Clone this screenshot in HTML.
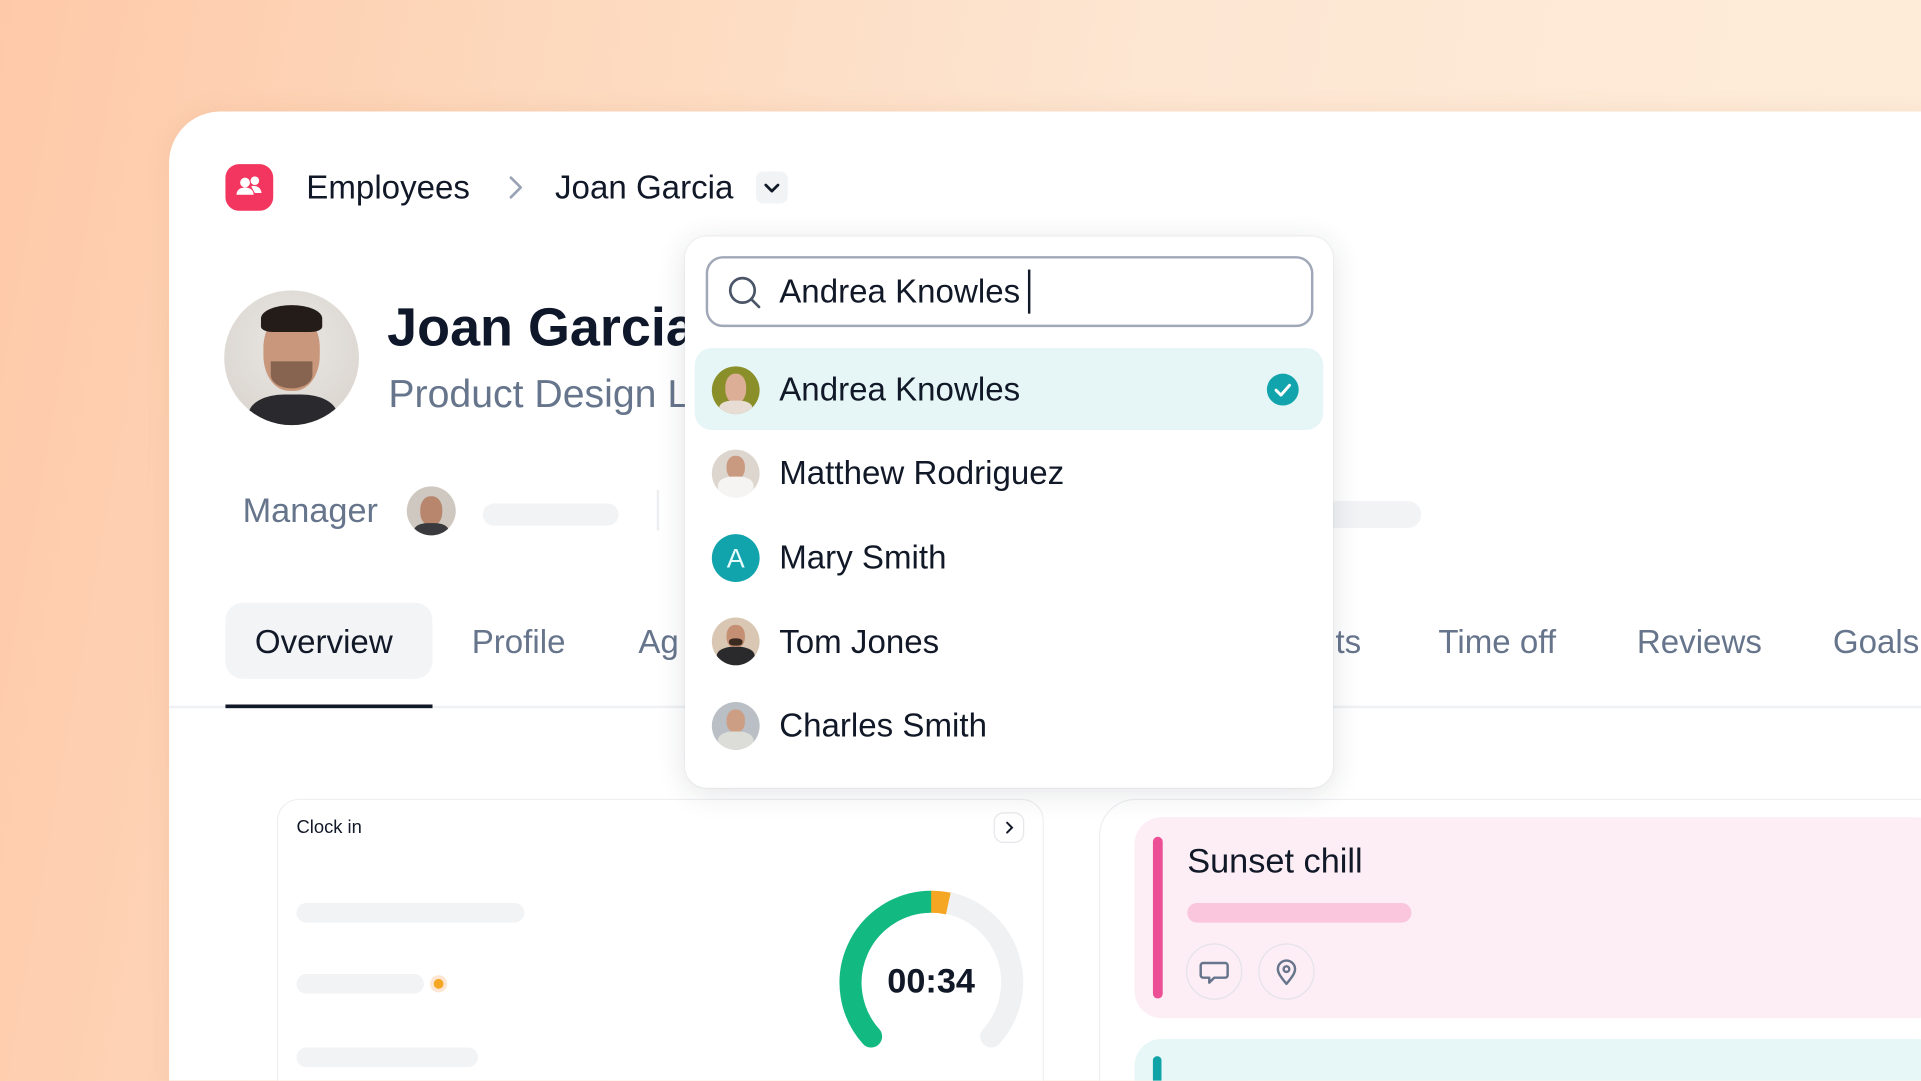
<!DOCTYPE html>
<html><head><meta charset="utf-8">
<style>
*{margin:0;padding:0;box-sizing:border-box}
html,body{width:1921px;height:1081px;overflow:hidden}
body{font-family:"Liberation Sans",sans-serif;color:#111827}
#clip{position:absolute;left:0;top:0;width:1921px;height:1081px;overflow:hidden;background:linear-gradient(100deg,#fec9a8 0%,#fdd8bc 25%,#fde6d2 55%,#feeedb 100%)}
#w{position:absolute;left:0;top:0;width:1568px;height:882px;overflow:hidden;transform:scale(1.2252);transform-origin:0 0}
.a{position:absolute}
.card{left:138px;top:91px;width:1440px;height:800px;background:#fff;border-radius:42px 0 0 0;box-shadow:0 0 18px rgba(200,140,100,.15)}
.t{position:absolute;white-space:nowrap;line-height:1}
.bar{position:absolute;background:#f2f3f5;border-radius:9px}
.av{position:absolute;border-radius:50%;overflow:hidden}
.tab{font-size:27px;color:#66758c;top:511px}
.row{position:absolute;left:567px;width:513px;height:67px;border-radius:14px}
.name{position:absolute;left:636px;font-size:27px;color:#111827;line-height:1}
</style></head><body><div id="clip"><div id="w">
<div class="a card"></div>

<!-- breadcrumb -->
<div class="a" style="left:184px;top:134px;width:39px;height:38px;background:#f3365f;border-radius:11px"></div>
<svg class="a" style="left:184px;top:134px" width="39" height="38" viewBox="0 0 39 38"><circle cx="16" cy="15" r="4" fill="#fff"/><circle cx="24" cy="13.5" r="3.5" fill="#fff"/><path d="M9 25c0-4 3-6 7-6s7 2 7 6z" fill="#fff"/><path d="M21 18c4-1 8 1 8.5 5.5H24" fill="#fff"/></svg>
<div class="t" style="left:250px;top:140px;font-size:27px;font-weight:500;color:#111827">Employees</div>
<svg class="a" style="left:412px;top:142px" width="18" height="22"><path d="M5 3l8 8-8 8" stroke="#9aa3b5" stroke-width="2.2" fill="none" stroke-linecap="round" stroke-linejoin="round"/></svg>
<div class="t" style="left:453px;top:140px;font-size:27px;color:#111827">Joan Garcia</div>
<div class="a" style="left:617px;top:140px;width:26px;height:26px;background:#f1f3f5;border-radius:6px"></div>
<svg class="a" style="left:617px;top:140px" width="26" height="26"><path d="M8 11l5 5 5-5" stroke="#111827" stroke-width="2.2" fill="none" stroke-linecap="round" stroke-linejoin="round"/></svg>

<!-- profile -->
<div class="av" style="left:183px;top:237px;width:110px;height:110px;background:radial-gradient(circle at 50% 40%,#e9e6e2,#d8d2cc)">
 <div class="a" style="left:20px;top:85px;width:72px;height:40px;border-radius:40% 40% 0 0;background:#2a2a2e"></div>
 <div class="a" style="left:32px;top:18px;width:46px;height:64px;border-radius:45%;background:#c9977b"></div>
 <div class="a" style="left:30px;top:12px;width:50px;height:22px;border-radius:50% 50% 20% 20%;background:#231c18"></div>
 <div class="a" style="left:38px;top:58px;width:34px;height:22px;border-radius:0 0 50% 50%;background:#5a4234;opacity:.6"></div>
</div>
<div class="t" style="left:316px;top:246px;font-size:44px;font-weight:700;color:#0f172a">Joan Garcia</div>
<div class="t" style="left:317px;top:305px;font-size:32px;color:#66758c">Product Design L</div>

<div class="t" style="left:198px;top:403px;font-size:28px;color:#66758c">Manager</div>
<div class="av" style="left:332px;top:397px;width:40px;height:40px;background:#cfc8c0"><div class="a" style="left:11px;top:8px;width:18px;height:24px;border-radius:45%;background:#b8866c"></div><div class="a" style="left:6px;top:30px;width:28px;height:14px;background:#3a3a3e;border-radius:40% 40% 0 0"></div></div>
<div class="bar" style="left:394px;top:411px;width:111px;height:18px"></div>
<div class="a" style="left:536px;top:400px;width:2px;height:33px;background:#eceef1"></div>
<div class="bar" style="left:1080px;top:409px;width:80px;height:22px;border-radius:11px"></div>

<!-- tabs -->
<div class="a" style="left:184px;top:492px;width:169px;height:62px;background:#f3f4f6;border-radius:14px"></div>
<div class="t tab" style="left:208px;color:#111827">Overview</div>
<div class="t tab" style="left:385px">Profile</div>
<div class="t tab" style="left:521px">Ag</div>
<div class="t tab" style="left:1090px">ts</div>
<div class="t tab" style="left:1174px">Time off</div>
<div class="t tab" style="left:1336px">Reviews</div>
<div class="t tab" style="left:1496px">Goals</div>
<div class="a" style="left:138px;top:576px;width:1430px;height:2px;background:#eff1f4"></div>
<div class="a" style="left:184px;top:575px;width:169px;height:3px;background:#111827"></div>

<!-- clock card -->
<div class="a" style="left:226px;top:652px;width:626px;height:260px;border:1.5px solid #eeeff2;border-radius:18px;background:#fff"></div>
<div class="t" style="left:242px;top:668px;font-size:15px;color:#111827">Clock in</div>
<div class="a" style="left:811px;top:663px;width:25px;height:25px;border:1.5px solid #e5e7eb;border-radius:8px"></div>
<svg class="a" style="left:811px;top:663px" width="25" height="25"><path d="M11 8.5l4 4-4 4" stroke="#111827" stroke-width="1.6" fill="none" stroke-linecap="round"/></svg>
<div class="bar" style="left:242px;top:737px;width:186px;height:16px"></div>
<div class="bar" style="left:242px;top:795px;width:104px;height:16px"></div>
<div class="a" style="left:351px;top:796px;width:14px;height:14px;border-radius:50%;background:#fde6d3"></div>
<div class="a" style="left:354px;top:799px;width:8px;height:8px;border-radius:50%;background:#f5a623"></div>
<div class="bar" style="left:242px;top:855px;width:148px;height:16px"></div>
<svg class="a" style="left:670px;top:710px" width="180" height="170" viewBox="670 710 180 170">
<path d="M772 736.7 A66 66 0 0 1 809 846" stroke="#eff1f3" stroke-width="18" fill="none" stroke-linecap="round"/>
<path d="M711 846 A66 66 0 0 1 760 736" stroke="#12b981" stroke-width="18" fill="none" stroke-linecap="round"/>
<path d="M760 736 A66 66 0 0 1 774 737.5" stroke="#f5a623" stroke-width="18" fill="none"/>
</svg>
<div class="t" style="left:700px;top:787px;width:120px;text-align:center;font-size:28px;font-weight:700;color:#111827">00:34</div>

<!-- right card -->
<div class="a" style="left:897px;top:652px;width:700px;height:260px;border:1.5px solid #eeeff2;border-radius:30px;background:#fff"></div>
<div class="a" style="left:926px;top:667px;width:660px;height:164px;background:#fdeef5;border-radius:22px"></div>
<div class="a" style="left:941px;top:683px;width:8px;height:132px;background:#ec4f95;border-radius:4px"></div>
<div class="t" style="left:969px;top:689px;font-size:28px;color:#111827">Sunset chill</div>
<div class="a" style="left:969px;top:737px;width:183px;height:16px;background:#f9c6de;border-radius:8px"></div>
<div class="a" style="left:968px;top:770px;width:46px;height:46px;border:1.5px solid #e3e3e8;border-radius:50%"></div>
<div class="a" style="left:1027px;top:770px;width:46px;height:46px;border:1.5px solid #e3e3e8;border-radius:50%"></div>
<svg class="a" style="left:968px;top:770px" width="46" height="46"><path d="M14 16h18a2 2 0 0 1 2 2v8a2 2 0 0 1-2 2h-9l-4 4v-4h-5a2 2 0 0 1-2-2v-8a2 2 0 0 1 2-2z" stroke="#66758c" stroke-width="2" fill="none" stroke-linejoin="round"/></svg>
<svg class="a" style="left:1027px;top:770px" width="46" height="46"><path d="M23 33c-5-6-7-9-7-12a7 7 0 0 1 14 0c0 3-2 6-7 12z" stroke="#66758c" stroke-width="2" fill="none" stroke-linejoin="round"/><circle cx="23" cy="21" r="2.3" stroke="#66758c" stroke-width="2" fill="none"/></svg>
<div class="a" style="left:926px;top:848px;width:660px;height:60px;background:#e7f6f6;border-radius:22px"></div>
<div class="a" style="left:941px;top:862px;width:7px;height:40px;background:#0fa3a8;border-radius:4px"></div>

<!-- dropdown -->
<div class="a" style="left:559px;top:193px;width:529px;height:450px;background:#fff;border-radius:18px;box-shadow:0 4px 24px rgba(30,40,60,.12),0 0 0 1px rgba(0,0,0,.03)"></div>
<div class="a" style="left:576px;top:209px;width:496px;height:58px;border:2px solid #a0a8b8;border-radius:14px"></div>
<svg class="a" style="left:590px;top:221px" width="34" height="34"><circle cx="16" cy="16" r="10" stroke="#4a5568" stroke-width="2.2" fill="none"/><path d="M23.5 23.5l6 6" stroke="#4a5568" stroke-width="2.2" stroke-linecap="round"/></svg>
<div class="t" style="left:636px;top:225px;font-size:27px;color:#111827">Andrea Knowles</div>
<div class="a" style="left:839px;top:220px;width:2px;height:36px;background:#111827"></div>

<div class="row" style="top:284px;background:#e6f6f7"></div>
<div class="av" style="left:581px;top:299px;width:39px;height:39px;background:#8a8f2a"><div class="a" style="left:11px;top:6px;width:17px;height:24px;border-radius:45%;background:#dcae96"></div><div class="a" style="left:6px;top:28px;width:27px;height:14px;background:#e8ddd5;border-radius:40% 40% 0 0"></div></div>
<div class="name" style="top:305px">Andrea Knowles</div>
<div class="a" style="left:1034px;top:305px;width:26px;height:26px;border-radius:50%;background:#12a4ad"></div>
<svg class="a" style="left:1034px;top:305px" width="26" height="26"><path d="M7.5 13.5l4 4 7-8" stroke="#fff" stroke-width="2.4" fill="none" stroke-linecap="round" stroke-linejoin="round"/></svg>

<div class="av" style="left:581px;top:367px;width:39px;height:39px;background:#ddd6cf"><div class="a" style="left:12px;top:5px;width:15px;height:19px;border-radius:45%;background:#c99a80"></div><div class="a" style="left:5px;top:22px;width:29px;height:18px;background:#f6f4f2;border-radius:40% 40% 0 0"></div></div>
<div class="name" style="top:373px">Matthew Rodriguez</div>

<div class="av" style="left:581px;top:436px;width:39px;height:39px;background:#12a4ad;color:#e6fbfb;font-size:22px;text-align:center;line-height:39px">A</div>
<div class="name" style="top:442px">Mary Smith</div>

<div class="av" style="left:581px;top:504px;width:39px;height:39px;background:#d9c7b3"><div class="a" style="left:12px;top:6px;width:15px;height:19px;border-radius:45%;background:#c58f73"></div><div class="a" style="left:14px;top:17px;width:11px;height:6px;background:#3a2a20;border-radius:40%"></div><div class="a" style="left:4px;top:24px;width:31px;height:18px;background:#2a2a2c;border-radius:40% 40% 0 0"></div></div>
<div class="name" style="top:511px">Tom Jones</div>

<div class="av" style="left:581px;top:573px;width:39px;height:39px;background:#b9bfc4"><div class="a" style="left:12px;top:6px;width:15px;height:19px;border-radius:45%;background:#cc9f85"></div><div class="a" style="left:5px;top:24px;width:29px;height:18px;background:#dcdcd8;border-radius:40% 40% 0 0"></div></div>
<div class="name" style="top:579px">Charles Smith</div>

</div></div></body></html>
